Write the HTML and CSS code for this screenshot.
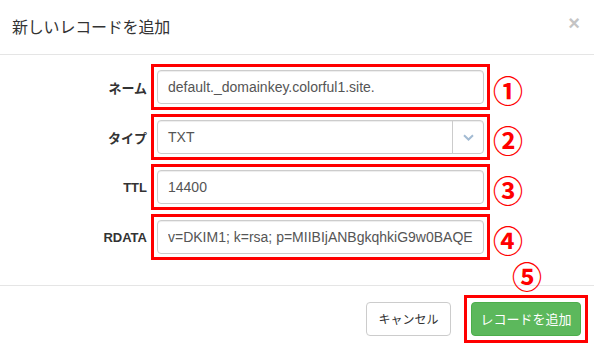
FILE: index.html
```html
<!DOCTYPE html>
<html lang="ja">
<head>
<meta charset="utf-8">
<title>新しいレコードを追加</title>
<link rel="stylesheet" href="styles.css">
</head>
<body>
<div class="modal">
  <div class="modal-header">
    <h4 class="modal-title">新しいレコードを追加</h4>
    <button class="close" type="button" aria-label="閉じる">×</button>
  </div>
  <div class="modal-body">
    <div class="form-row">
      <label class="form-label">ネーム</label>
      <div class="field marked"><input class="form-control" type="text" value="default._domainkey.colorful1.site."></div>
      <span class="num">①</span>
    </div>
    <div class="form-row">
      <label class="form-label">タイプ</label>
      <div class="field marked">
        <div class="form-control select">
          <span class="select-value">TXT</span>
          <span class="select-arrow">
            <svg width="11" height="7" viewBox="0 0 11 7"><path d="M1 1.2 L5.5 5.5 L10 1.2" fill="none" stroke="#a3bbd3" stroke-width="2"/></svg>
          </span>
        </div>
      </div>
      <span class="num">②</span>
    </div>
    <div class="form-row">
      <label class="form-label">TTL</label>
      <div class="field marked"><input class="form-control" type="text" value="14400"></div>
      <span class="num">③</span>
    </div>
    <div class="form-row">
      <label class="form-label">RDATA</label>
      <div class="field marked"><input class="form-control" type="text" value="v=DKIM1; k=rsa; p=MIIBIjANBgkqhkiG9w0BAQEFAAOCAQ8AMIIBCgKCAQEA"></div>
      <span class="num">④</span>
    </div>
  </div>
  <div class="modal-footer">
    <button class="btn btn-default" type="button">キャンセル</button>
    <div class="primary-wrap">
      <span class="num num-5">⑤</span>
      <div class="btn-mark"><button class="btn btn-success" type="button">レコードを追加</button></div>
    </div>
  </div>
</div>
</body>
</html>
```
FILE: styles.css
```css
* { box-sizing: border-box; }
html, body { margin: 0; padding: 0; background: #fff; }
body {
  font-family: "Liberation Sans", Arial, "Noto Sans CJK JP", sans-serif;
  font-size: 14px;
  color: #333;
}
.modal { width: 594px; height: 352px; background: #fff; overflow: hidden; }
.modal-header {
  height: 55px;
  border-bottom: 1px solid #e5e5e5;
  display: flex;
  align-items: center;
  justify-content: space-between;
  padding: 0 14px 2px 12px;
}
.modal-title {
  margin: 0;
  font-family: "Noto Sans CJK JP", sans-serif;
  font-weight: 400;
  font-size: 16px;
  color: #333;
  letter-spacing: -0.2px;
}
.close {
  border: 0;
  background: none;
  padding: 0;
  font-family: "Liberation Sans", Arial, sans-serif;
  font-size: 20px;
  font-weight: bold;
  color: #c4c4c4;
  line-height: 1;
  margin-top: -6px;
}
.modal-body {
  padding: 15px 0 31px 0;
  display: flex;
  flex-direction: column;
  gap: 16px;
}
.form-row {
  display: flex;
  align-items: center;
  height: 34px;
}
.form-label {
  width: 147px;
  text-align: right;
  font-weight: bold;
  font-size: 13px;
  color: #333;
  font-family: "Liberation Sans", Arial, "Noto Sans CJK JP", sans-serif;
}
.field {
  margin-left: 10px;
  width: 327px;
  height: 34px;
}
.marked {
  outline: 3px solid #f00;
  outline-offset: 3px;
}
.form-control {
  display: block;
  width: 100%;
  height: 34px;
  padding: 6px 10px;
  font-family: "Liberation Sans", Arial, sans-serif;
  font-size: 14px;
  color: #555;
  background: #fff;
  border: 1px solid #ccc;
  border-radius: 4px;
  box-shadow: inset 0 1px 1px rgba(0,0,0,.075);
}
.select {
  display: flex;
  align-items: center;
  padding: 0 0 0 10px;
}
.select-value { flex: 1; }
.select-arrow {
  width: 31px;
  height: 100%;
  border-left: 1px solid #ccc;
  display: flex;
  align-items: center;
  justify-content: center;
}
.num {
  margin-left: 9px;
  color: #f00;
  font-family: "Noto Sans CJK JP", sans-serif;
  font-weight: bold;
  font-size: 30px;
  line-height: 1;
  margin-top: 3px;
}
.modal-footer {
  border-top: 1px solid #e5e5e5;
  display: flex;
  justify-content: flex-end;
  align-items: flex-start;
  gap: 20px;
  padding: 16px 13px 0 0;
  height: 66px;
}
.btn {
  display: block;
  height: 34px;
  border-radius: 4px;
  font-family: "Noto Sans CJK JP", sans-serif;
  font-size: 12px;
  padding: 0;
  line-height: 32px;
  white-space: nowrap;
  cursor: pointer;
}
.btn-default {
  width: 85px;
  background: #fff;
  color: #333;
  border: 1px solid #ccc;
}
.primary-wrap { position: relative; }
.btn-mark {
  outline: 3px solid #f00;
  outline-offset: 4px;
}
.btn-success {
  width: 110px;
  background: #5cb85c;
  color: #fff;
  border: 1px solid #4cae4c;
  font-size: 13px;
}
.num-5 {
  position: absolute;
  left: 41px;
  top: -42px;
  margin: 0;
}
```
